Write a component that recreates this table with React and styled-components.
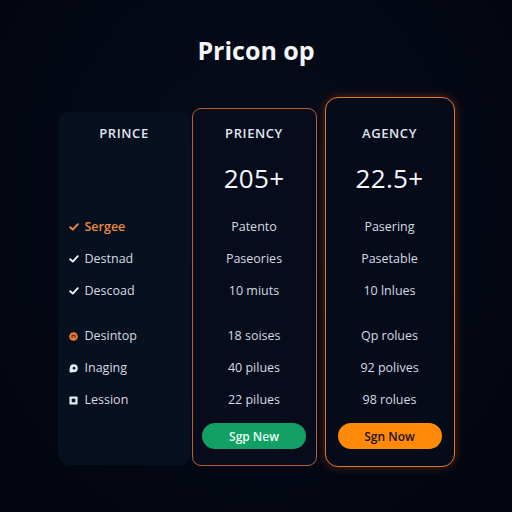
import React from "react";
import styled, { createGlobalStyle } from "styled-components";

const GlobalStyle = createGlobalStyle`
  html, body {
    margin: 0;
    padding: 0;
    background: #040814;
  }
  body {
    width: 512px;
    height: 512px;
    overflow: hidden;
    font-family: "Open Sans", "Noto Sans", sans-serif;
    color: #e6e9ef;
  }
`;

const Page = styled.div`
  width: 512px;
  height: 512px;
  box-sizing: border-box;
  background: radial-gradient(ellipse at 50% 40%, #070d1c 0%, #040814 60%, #02050d 100%);
  display: flex;
  flex-direction: column;
  align-items: center;
  padding-top: 32px;
`;

const Title = styled.h1`
  margin: 0;
  height: 36px;
  line-height: 36px;
  font-size: 25px;
  font-weight: 700;
  color: #f4f6fa;
`;

const Table = styled.div`
  display: flex;
  align-items: flex-start;
  margin-top: 29px;
`;

const Column = styled.div`
  box-sizing: border-box;
  width: ${(p) => p.$width}px;
  margin-top: ${(p) => p.$offset || 0}px;
  margin-left: ${(p) => p.$gap || 0}px;
  padding: ${(p) => p.$padTop}px 0 ${(p) => p.$padBottom}px;
  border-radius: ${(p) => p.$radius}px;
  background: ${(p) => p.$bg};
  border: ${(p) => (p.$border ? `1.5px solid ${p.$border}` : "none")};
  box-shadow: ${(p) => p.$glow || "none"};
  display: flex;
  flex-direction: column;
  align-items: ${(p) => (p.$left ? "stretch" : "center")};
`;

const Header = styled.div`
  height: 20px;
  line-height: 20px;
  font-size: 13px;
  font-weight: 600;
  letter-spacing: 0.6px;
  color: #e2e6ee;
  text-align: center;
`;

const Price = styled.div`
  height: 36px;
  line-height: 36px;
  margin-top: 17px;
  font-size: 26px;
  font-weight: 500;
  color: #f7f8fb;
  letter-spacing: 0.3px;
`;

const PriceSpacer = styled.div`
  height: 36px;
  margin-top: 17px;
`;

const Rows = styled.div`
  margin-top: 15px;
  display: flex;
  flex-direction: column;
`;

const Row = styled.div`
  height: 32px;
  line-height: 32px;
  font-size: 12.5px;
  color: ${(p) => (p.$accent ? "#ee8a3e" : "#d6dae2")};
  font-weight: ${(p) => (p.$accent ? 600 : 400)};
  display: flex;
  align-items: center;
  justify-content: ${(p) => (p.$left ? "flex-start" : "center")};
  padding-left: ${(p) => (p.$left ? "11px" : "0")};
  margin-top: ${(p) => (p.$break ? "13px" : "0")};
`;

const Icon = styled.span`
  width: 10px;
  height: 10px;
  margin-right: 6px;
  display: inline-flex;
  align-items: center;
  justify-content: center;
`;

const Button = styled.div`
  margin-top: 7px;
  width: 104px;
  height: 26px;
  border-radius: 13px;
  background: ${(p) => p.$bg};
  color: ${(p) => p.$fg};
  font-size: 12px;
  font-weight: 600;
  display: flex;
  align-items: center;
  justify-content: center;
`;

const Check = ({ color }) => (
  <svg width="10" height="10" viewBox="0 0 10 10">
    <path d="M1.2 5.2 L3.8 7.6 L8.8 2.2" fill="none" stroke={color} strokeWidth="1.9" strokeLinecap="round" strokeLinejoin="round" />
  </svg>
);

const DotIcon = () => (
  <svg width="9" height="9" viewBox="0 0 10 10">
    <circle cx="5" cy="5" r="4.8" fill="#ee7a35" />
    <path d="M3.4 6.8 V3.6 H6.6 V6.8" fill="none" stroke="#5a1e08" strokeWidth="1.2" />
  </svg>
);

const BubbleIcon = () => (
  <svg width="9" height="9" viewBox="0 0 10 10">
    <circle cx="5.3" cy="4.8" r="4.4" fill="#e6e9ef" />
    <rect x="0.6" y="5" width="3.6" height="4.4" rx="0.8" fill="#e6e9ef" />
    <circle cx="5.6" cy="4.6" r="1.5" fill="#0a1120" />
  </svg>
);

const BoxIcon = () => (
  <svg width="9" height="9" viewBox="0 0 10 10">
    <rect x="0.5" y="0.5" width="9" height="9" rx="1" fill="#e6e9ef" />
    <rect x="3" y="3" width="4" height="4" fill="#0a1120" />
  </svg>
);

const features = [
  { label: "Sergee", icon: <Check color="#ee8a3e" />, accent: true },
  { label: "Destnad", icon: <Check color="#eef0f4" /> },
  { label: "Descoad", icon: <Check color="#eef0f4" /> },
  { label: "Desintop", icon: <DotIcon />, gapBefore: true },
  { label: "Inaging", icon: <BubbleIcon /> },
  { label: "Lession", icon: <BoxIcon /> },
];

const plans = [
  {
    name: "PRIENCY",
    price: "205+",
    rows: ["Patento", "Paseories", "10 miuts", "18 soises", "40 pilues", "22 pilues"],
    button: { label: "Sgp New", bg: "#12a064", fg: "#e8fff4" },
    col: { width: 125, gap: 1, offset: 11, padTop: 14, padBottom: 16, radius: 9, bg: "#060c1b", border: "#b9612a" },
  },
  {
    name: "AGENCY",
    price: "22.5+",
    rows: ["Pasering", "Pasetable", "10 lnlues", "Qp rolues", "92 polives", "98 rolues"],
    button: { label: "Sgn Now", bg: "#ff8a0a", fg: "#1a1208" },
    col: {
      width: 130,
      gap: 8,
      offset: 0,
      padTop: 25,
      padBottom: 17,
      radius: 13,
      bg: "#050b19",
      border: "#e2742c",
      glow: "0 0 10px rgba(230, 100, 30, 0.35)",
    },
  },
];

export default function App() {
  return (
    <>
      <GlobalStyle />
      <Page>
        <Title>Pricon op</Title>
        <Table>
          <Column $width={133} $offset={15} $padTop={11} $padBottom={49} $radius={12} $bg="#07101f" $left>
            <Header>PRINCE</Header>
            <PriceSpacer />
            <Rows>
              {features.map((f) => (
                <Row key={f.label} $left $accent={f.accent} $break={f.gapBefore}>
                  <Icon>{f.icon}</Icon>
                  {f.label}
                </Row>
              ))}
            </Rows>
          </Column>
          {plans.map((p) => (
            <Column
              key={p.name}
              $width={p.col.width}
              $gap={p.col.gap}
              $offset={p.col.offset}
              $padTop={p.col.padTop}
              $padBottom={p.col.padBottom}
              $radius={p.col.radius}
              $bg={p.col.bg}
              $border={p.col.border}
              $glow={p.col.glow}
            >
              <Header>{p.name}</Header>
              <Price>{p.price}</Price>
              <Rows>
                {p.rows.map((r, i) => (
                  <Row key={r} $break={i === 3}>
                    {r}
                  </Row>
                ))}
              </Rows>
              <Button $bg={p.button.bg} $fg={p.button.fg}>
                {p.button.label}
              </Button>
            </Column>
          ))}
        </Table>
      </Page>
    </>
  );
}
